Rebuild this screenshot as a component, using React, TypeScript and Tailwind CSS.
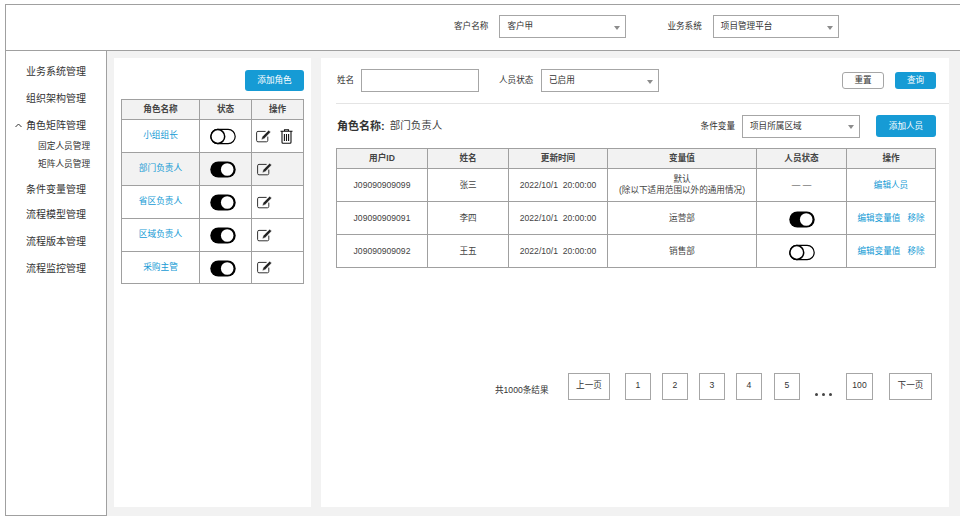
import React from 'react';

const font = { fontFamily: '"Liberation Sans", "Noto Sans CJK SC", sans-serif' };

const navItems = [
  { label: '业务系统管理', h: 'h-[27px]' },
  { label: '组织架构管理', h: 'h-[27px]' },
  { label: '角色矩阵管理', h: 'h-[27px]', open: true, children: ['固定人员管理', '矩阵人员管理'] },
  { label: '条件变量管理', h: 'h-[25px]' },
  { label: '流程模型管理', h: 'h-[25px]' },
  { label: '流程版本管理', h: 'h-[27px] mt-[1px]' },
  { label: '流程监控管理', h: 'h-[27px]' },
];

const roles = [
  { name: '小组组长', on: false, del: true },
  { name: '部门负责人', on: true, active: true },
  { name: '省区负责人', on: true },
  { name: '区域负责人', on: true },
  { name: '采购主管', on: true },
];

const Toggle = ({ on }: { on: boolean }) => (
  <svg width="26" height="17" viewBox="0 0 26 17" className="inline-block">
    {on ? (
      <>
        <rect x="0.3" y="0.5" width="25.4" height="16" rx="8" fill="#000" />
        <circle cx="17.2" cy="8.5" r="6.3" fill="#fff" />
      </>
    ) : (
      <>
        <rect x="0.8" y="1.4" width="24.4" height="14.2" rx="7.1" fill="#fff" stroke="#000" strokeWidth="1.2" />
        <circle cx="7.8" cy="8.5" r="6.9" fill="#fff" stroke="#000" strokeWidth="1.5" />
      </>
    )}
  </svg>
);

const EditIcon = () => (
  <svg width="15" height="13" viewBox="0 0 15 13" className="inline-block">
    <path d="M9.6 1.4H2A1.4 1.4 0 0 0 .6 2.8v7.6A1.4 1.4 0 0 0 2 11.8h8.4a1.4 1.4 0 0 0 1.4-1.4V6.6" fill="none" stroke="#333" strokeWidth="1" />
    <path d="M12.6.2l2.1 1.8-6.5 6.7-2.9 1 .9-3z" fill="#222" stroke="#fff" strokeWidth=".5" />
  </svg>
);

const TrashIcon = () => (
  <svg width="13" height="15" viewBox="0 0 13 15" className="inline-block">
    <path d="M4.5 2V.7h4V2M.5 2.3h12M2 2.5v10.8a1 1 0 0 0 1 1h7a1 1 0 0 0 1-1V2.5M4.4 5v7M6.5 5v7M8.6 5v7" fill="none" stroke="#111" strokeWidth="1.1" />
  </svg>
);

const Select = ({ value, className }: { value: string; className: string }) => (
  <div className={`flex h-[23px] items-center justify-between border border-[#a6a6a6] bg-white pl-[7px] pr-[5px] text-[8.6px] text-[#333] ${className}`}>
    <span>{value}</span>
    <span className="mt-[2px] h-0 w-0 border-x-[3px] border-t-[4px] border-x-transparent border-t-[#8c8c8c]" />
  </div>
);

const PageBtn = ({ children, className }: { children: React.ReactNode; className: string }) => (
  <div className={`flex h-[27px] items-center justify-center border border-[#a6a6a6] bg-white pb-[2px] text-[8.6px] text-[#333] ${className}`}>
    {children}
  </div>
);

const roleCell = 'border border-[#a0a0a0] p-0 text-center';
const userCell = 'border border-[#a0a0a0] p-0 text-center text-[8.6px] text-[#444]';

export default function App() {
  return (
    <div className="flex h-[516px] w-[960px] flex-col overflow-hidden bg-white pl-[5px] pt-[4px]" style={font}>
      <div className="flex h-[47px] shrink-0 items-center border-y border-l border-[#a0a0a0] pb-[2px] pl-[448px]">
        <span className="mr-[11px] text-[8.6px] text-[#333]">客户名称</span>
        <Select value="客户甲" className="w-[127px]" />
        <span className="ml-[41px] mr-[11px] text-[8.6px] text-[#333]">业务系统</span>
        <Select value="项目管理平台" className="w-[126px]" />
      </div>

      <div className="flex min-h-0 flex-1">
        <aside className="w-[102px] shrink-0 border-x border-b border-[#a0a0a0] pt-[7px]">
          {navItems.map((item) => (
            <div key={item.label}>
              <div className={`relative flex items-center pl-[20px] text-[10px] text-[#333] ${item.h}`}>
                {item.open && (
                  <svg width="7" height="5" viewBox="0 0 7 5" className="absolute left-[9px] top-[11px]">
                    <path d="M.5 4L3.5 1l3 3" fill="none" stroke="#333" strokeWidth="1" />
                  </svg>
                )}
                {item.label}
              </div>
              {item.children && (
                <div className="mt-[-1px] pb-[3px]">
                  {item.children.map((c) => (
                    <div key={c} className="flex h-[18px] items-center pl-[32px] text-[8.7px] text-[#333]">{c}</div>
                  ))}
                </div>
              )}
            </div>
          ))}
        </aside>

        <main className="flex min-w-0 flex-1 gap-[10px] bg-[#f2f2f2] px-[7px] pb-[9px] pt-[7px]">
          <section className="w-[197px] shrink-0 bg-white px-[7px] pt-[12px]">
            <div className="flex justify-end">
              <button className="h-[21px] w-[59px] rounded-[3px] bg-[#169bd5] text-[8.6px] text-white">添加角色</button>
            </div>
            <table className="mt-[8px] w-[183px] table-fixed border-collapse">
              <thead>
                <tr className="h-[20px] bg-[#f2f2f2] text-[8.6px] text-[#444]">
                  <th className={`${roleCell} w-[78px] font-bold`}>角色名称</th>
                  <th className={`${roleCell} w-[52px] font-bold`}>状态</th>
                  <th className={`${roleCell} font-bold`}>操作</th>
                </tr>
              </thead>
              <tbody>
                {roles.map((r, i) => (
                  <tr key={r.name} className={`${i === 4 ? 'h-[32px]' : 'h-[33px]'} ${r.active ? 'bg-[#f2f2f2]' : 'bg-white'}`}>
                    <td className={`${roleCell} text-[8.7px] text-[#169bd5]`}>{r.name}</td>
                    <td className={roleCell}><div className="flex items-center justify-center pr-[5px] pt-[1px]"><Toggle on={r.on} /></div></td>
                    <td className={roleCell}>
                      <div className={`flex items-center gap-[9px] ${i === 0 ? 'pl-[4px]' : 'pl-[5px]'}`}>
                        <EditIcon />
                        {r.del && <TrashIcon />}
                      </div>
                    </td>
                  </tr>
                ))}
              </tbody>
            </table>
          </section>

          <section className="flex min-w-0 w-[628px] shrink-0 flex-col bg-white pt-[11px]">
            <div className="flex h-[23px] items-center pl-[16px] pr-[13px] text-[8.6px] text-[#333]">
              <span className="w-[24px]">姓名</span>
              <div className="h-[23px] w-[118px] border border-[#a6a6a6]" />
              <span className="ml-[20px] w-[42px]">人员状态</span>
              <Select value="已启用" className="w-[118px]" />
              <button className="ml-auto h-[17px] w-[42px] rounded-[3px] border border-[#a6a6a6] bg-white text-[8.6px] text-[#333]">重置</button>
              <button className="ml-[11px] h-[17px] w-[41px] rounded-[3px] bg-[#169bd5] text-[8.6px] text-white">查询</button>
            </div>
            <div className="ml-[15px] mt-[11px] border-t border-[#e4e4e4]" />
            <div className="mt-[11px] flex h-[22px] items-center pl-[16px] pr-[13px]">
              <span className="text-[11px] font-bold text-[#333]">角色名称:</span>
              <span className="ml-[5px] text-[10.5px] text-[#444]">部门负责人</span>
              <span className="ml-auto mr-[7px] text-[8.6px] text-[#333]">条件变量</span>
              <Select value="项目所属区域" className="w-[118px]" />
              <button className="ml-[16px] h-[22px] w-[60px] rounded-[3px] bg-[#169bd5] text-[8.6px] text-white">添加人员</button>
            </div>

            <table className="ml-[15px] mt-[11px] w-[600px] table-fixed border-collapse">
              <thead>
                <tr className="h-[20px] bg-[#f2f2f2]">
                  <th className={`${userCell} w-[91px] font-bold`}>用户ID</th>
                  <th className={`${userCell} w-[81px] font-bold`}>姓名</th>
                  <th className={`${userCell} w-[99px] font-bold`}>更新时间</th>
                  <th className={`${userCell} w-[149px] font-bold`}>变量值</th>
                  <th className={`${userCell} w-[90px] font-bold`}>人员状态</th>
                  <th className={`${userCell} font-bold`}>操作</th>
                </tr>
              </thead>
              <tbody>
                <tr className="h-[33px]">
                  <td className={userCell}>J09090909099</td>
                  <td className={userCell}>张三</td>
                  <td className={userCell}>2022/10/1&nbsp;&nbsp;20:00:00</td>
                  <td className={`${userCell} leading-[11px]`}>默认<br />(除以下适用范围以外的通用情况)</td>
                  <td className={userCell}>— —</td>
                  <td className={userCell}><span className="text-[#169bd5]">编辑人员</span></td>
                </tr>
                <tr className="h-[33px]">
                  <td className={userCell}>J09090909091</td>
                  <td className={userCell}>李四</td>
                  <td className={userCell}>2022/10/1&nbsp;&nbsp;20:00:00</td>
                  <td className={userCell}>运营部</td>
                  <td className={userCell}><div className="flex justify-center pt-[2px]"><Toggle on /></div></td>
                  <td className={userCell}><span className="text-[#169bd5]">编辑变量值</span><span className="ml-[7px] text-[#169bd5]">移除</span></td>
                </tr>
                <tr className="h-[33px]">
                  <td className={userCell}>J09090909092</td>
                  <td className={userCell}>王五</td>
                  <td className={userCell}>2022/10/1&nbsp;&nbsp;20:00:00</td>
                  <td className={userCell}>销售部</td>
                  <td className={userCell}><div className="flex justify-center pt-[2px]"><Toggle on={false} /></div></td>
                  <td className={userCell}><span className="text-[#169bd5]">编辑变量值</span><span className="ml-[7px] text-[#169bd5]">移除</span></td>
                </tr>
              </tbody>
            </table>

            <div className="ml-[174px] mt-[105px] flex items-start">
              <span className="mr-[19px] mt-[11px] w-[54px] whitespace-nowrap text-[8.6px] text-[#333]">共1000条结果</span>
              <PageBtn className="w-[42px]">上一页</PageBtn>
              <div className="ml-[15px] flex gap-[11px]">
                {['1', '2', '3', '4'].map((n) => (
                  <PageBtn key={n} className="w-[26px]">{n}</PageBtn>
                ))}
                <PageBtn className="ml-[1px] w-[26px]">5</PageBtn>
              </div>
              <span className="ml-[15px] mt-[20px] flex w-[17px] gap-[4px]">
                <i className="h-[3px] w-[3px] rounded-full bg-[#444]" />
                <i className="h-[3px] w-[3px] rounded-full bg-[#444]" />
                <i className="h-[3px] w-[3px] rounded-full bg-[#444]" />
              </span>
              <PageBtn className="ml-[14px] w-[27px]">100</PageBtn>
              <PageBtn className="ml-[16px] w-[43px]">下一页</PageBtn>
            </div>
          </section>
        </main>
      </div>
    </div>
  );
}
